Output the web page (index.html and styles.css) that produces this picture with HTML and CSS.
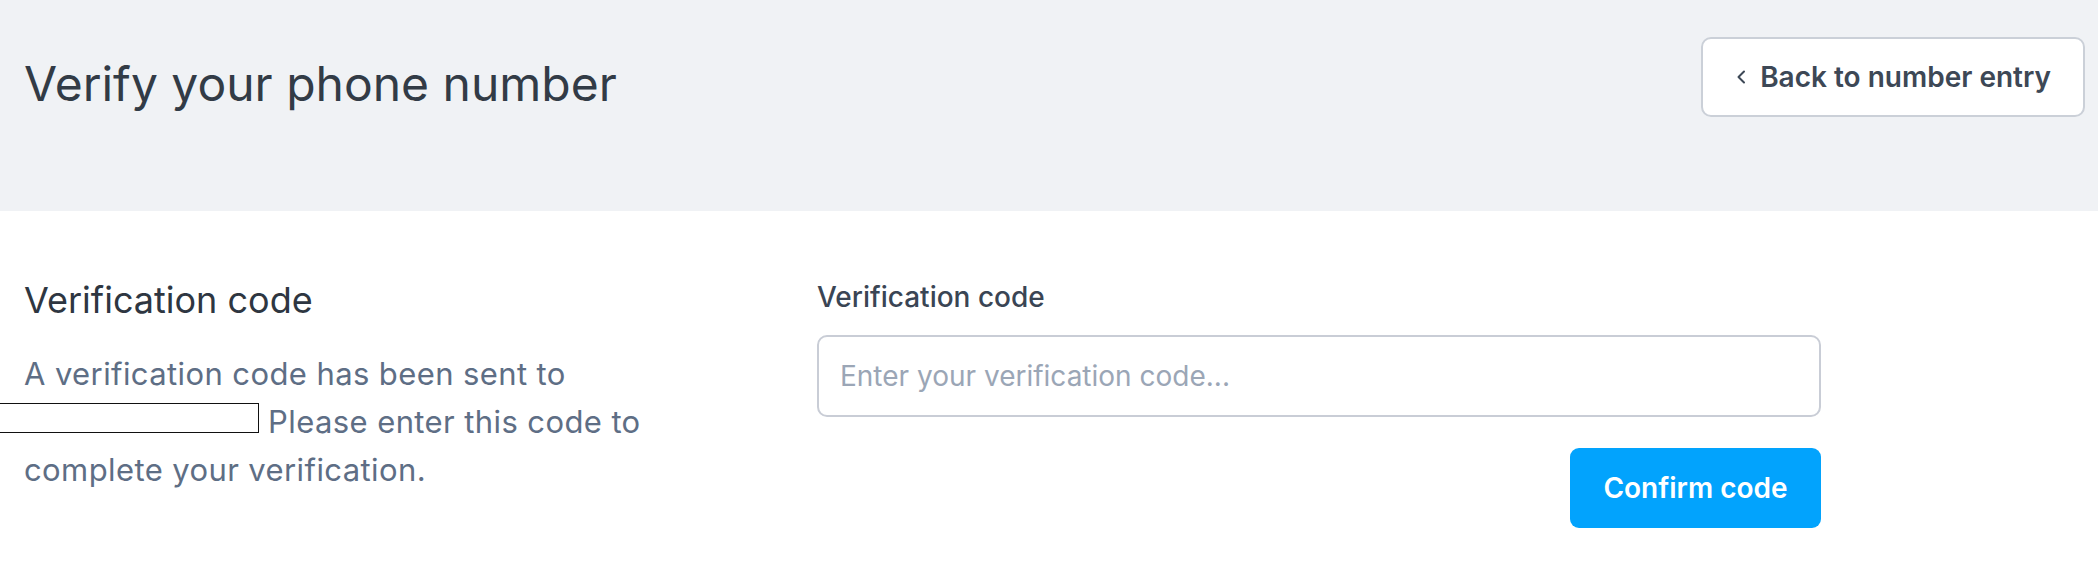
FILE: index.html
```html
<!DOCTYPE html>
<html lang="en">
<head>
<meta charset="utf-8">
<title>Verify your phone number</title>
<link rel="stylesheet" href="styles.css">
</head>
<body>
  <header class="page-header">
    <h1 class="page-title">Verify your phone number</h1>
    <button class="back-btn" type="button">
      <svg class="back-icon" width="12" height="16" viewBox="0 0 12 16" aria-hidden="true">
        <path d="M9 2.5 L3.5 8 L9 13.5" fill="none" stroke="currentColor" stroke-width="2" stroke-linecap="round" stroke-linejoin="round"/>
      </svg>
      <span>Back to number entry</span>
    </button>
  </header>
  <main class="content">
    <section class="intro">
      <h2 class="intro-title">Verification code</h2>
      <p class="intro-text">A verification code has been sent to <span class="redacted"></span> Please enter this code to complete your verification.</p>
    </section>
    <form class="code-form">
      <label class="field-label" for="code">Verification code</label>
      <input class="field-input" id="code" type="text" placeholder="Enter your verification code...">
      <div class="actions">
        <button class="confirm-btn" type="button">Confirm code</button>
      </div>
    </form>
  </main>
</body>
</html>
```
FILE: styles.css
```css
* { box-sizing: border-box; }
html, body { margin: 0; padding: 0; background: #ffffff; }
body {
  font-family: Inter, "Noto Sans", "Liberation Sans", sans-serif;
  width: 2098px;
  height: 562px;
  overflow: hidden;
}
.page-header {
  background: #f0f2f5;
  height: 211px;
  padding: 37px 13px 0 24px;
  display: flex;
  justify-content: space-between;
  align-items: flex-start;
}
.page-title {
  margin: 18px 0 0 0;
  font-size: 48px;
  line-height: 58px;
  font-weight: 400;
  color: #323b46;
}
.back-btn {
  height: 80px;
  display: flex;
  align-items: center;
  gap: 13px;
  padding: 0 32px;
  background: #ffffff;
  border: 2px solid #cbd0d8;
  border-radius: 10px;
  font-family: inherit;
  font-size: 28px;
  font-weight: 600;
  color: #3d4856;
  white-space: nowrap;
}
.back-icon { flex: none; display: block; }
.content {
  display: flex;
  padding: 67px 0 0 24px;
}
.intro {
  width: 745px;
  flex: none;
}
.intro-title {
  margin: 0;
  font-size: 36px;
  line-height: 44px;
  font-weight: 400;
  color: #2e3641;
}
.intro-text {
  margin: 28px 0 0 0;
  font-size: 31px;
  line-height: 48px;
  letter-spacing: 0.4px;
  color: #5e6e85;
  width: 690px;
}
.redacted {
  display: inline-block;
  width: 261px;
  height: 30px;
  margin-left: -26px;
  border: 1.5px solid #111111;
  vertical-align: baseline;
}
.code-form {
  margin-left: 48px;
  width: 1004px;
  display: flex;
  flex-direction: column;
}
.field-label {
  margin-top: 3px;
  font-size: 28px;
  line-height: 32px;
  font-weight: 500;
  color: #3a4554;
}
.field-input {
  margin-top: 22px;
  height: 82px;
  width: 100%;
  border: 2px solid #c9cdd6;
  border-radius: 10px;
  padding: 0 21px;
  font-family: inherit;
  font-size: 28px;
  color: #2e3641;
  background: #ffffff;
  outline: none;
}
.field-input::placeholder { color: #9ba6b6; }
.actions {
  margin-top: 31px;
  display: flex;
  justify-content: flex-end;
}
.confirm-btn {
  height: 80px;
  width: 251px;
  border: none;
  border-radius: 9px;
  background: #02a3fd;
  color: #ffffff;
  font-family: inherit;
  font-size: 28px;
  font-weight: 600;
}
```
